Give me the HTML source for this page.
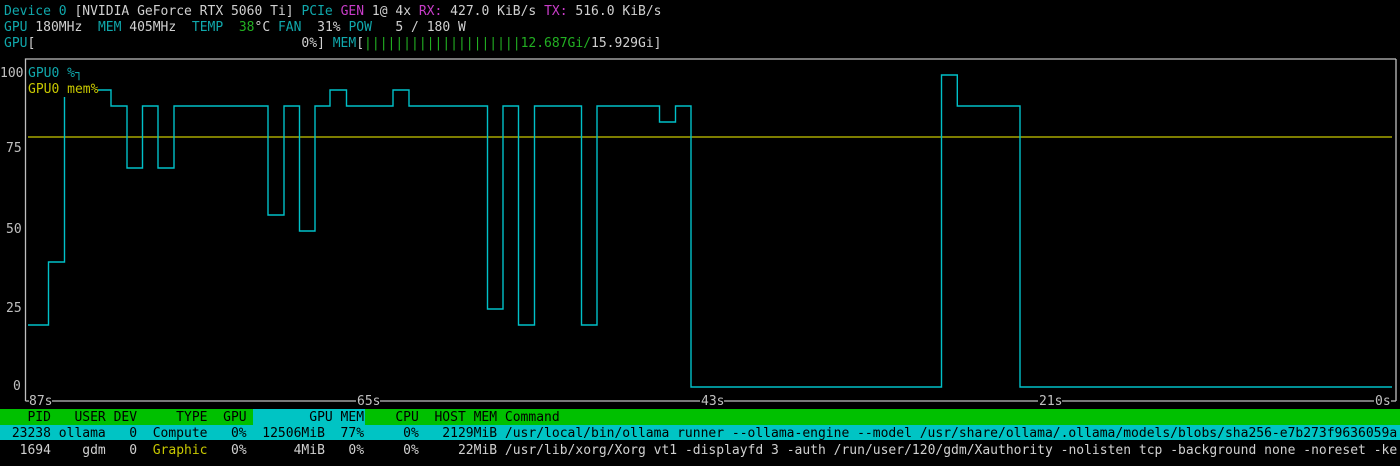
<!DOCTYPE html>
<html><head><meta charset="utf-8"><style>
html,body{margin:0;padding:0;background:#000;width:1400px;height:466px;overflow:hidden;position:relative}
.r{position:absolute;left:4px;height:16.28px;line-height:16.28px;font-family:"DejaVu Sans Mono","Liberation Mono",monospace;font-size:13.01px;white-space:pre;color:#d0d0d0}
.c{color:#10a8ac}.m{color:#c83cc8}.g{color:#22b022}.y{color:#c8c800}.k{color:#000}
.l{position:absolute;font-family:"DejaVu Sans Mono","Liberation Mono",monospace;font-size:13.01px;white-space:pre;color:#c0c0c0;line-height:16px}
</style></head><body>
<div class="r" style="top:3.5px"><span class="c">Device 0</span> [NVIDIA GeForce RTX 5060 Ti] <span class="c">PCIe</span> <span class="m">GEN</span> 1@ 4x <span class="m">RX:</span> 427.0 KiB/s <span class="m">TX:</span> 516.0 KiB/s</div>
<div class="r" style="top:19.8px"><span class="c">GPU</span> 180MHz  <span class="c">MEM</span> 405MHz  <span class="c">TEMP</span>  <span class="g">38</span>°C <span class="c">FAN</span>  31% <span class="c">POW</span>   5 / 180 W</div>
<div class="r" style="top:36.1px"><span class="c">GPU</span>[                                  0%] <span class="c">MEM</span>[<span class="g">||||||||||||||||||||12.687Gi/</span>15.929Gi]</div>

<svg style="position:absolute;left:0;top:0" width="1400" height="466">
<g fill="none" stroke="#bfbfbf" stroke-width="1.3">
<path d="M1396 59H25.5V401"/>
<path d="M1396 59V401"/>
<path d="M25.5 401H29 M52 401H356 M380 401H700 M724 401H1038 M1062 401H1374 M1391 401H1396"/>
</g>
<path d="M28 137H1392" stroke="#c8c800" stroke-width="1.3" fill="none"/>
<g fill="none" stroke="#00c0c8" stroke-width="1.4">
<path d="M28 325H48.5V262H64.5V97"/>
<path d="M98 90H111V106H127V168H142.5V106H158V168H174V106H268V215H284V106H299.5V231H315V106H330V90H346.5V106H393V90H409V106H487.5V309H503V106H518.5V325H534.5V106H581.5V325H597V106H659.5V122H675.5V106H691V387H941.5V75H957.3V106H1020V387H1392"/>
</g>
</svg>

<div class="l" style="left:0;top:66px">100</div>
<div class="l" style="left:6px;top:141px">75</div>
<div class="l" style="left:6px;top:222px">50</div>
<div class="l" style="left:6px;top:301px">25</div>
<div class="l" style="left:13px;top:379px">0</div>
<div class="l c" style="left:28px;top:66px;color:#10a8ac">GPU0 %┐</div>
<div class="l y" style="left:28px;top:82px;color:#c8c800">GPU0 mem%</div>
<div class="l" style="left:29px;top:394px">87s</div>
<div class="l" style="left:357px;top:394px">65s</div>
<div class="l" style="left:701px;top:394px">43s</div>
<div class="l" style="left:1039px;top:394px">21s</div>
<div class="l" style="left:1375px;top:394px">0s</div>

<div style="position:absolute;left:0;top:409px;width:1400px;height:16.3px;background:#00c000"></div>
<div style="position:absolute;left:253px;top:409px;width:112px;height:16.3px;background:#00c4c4"></div>
<div style="position:absolute;left:0;top:425.3px;width:1400px;height:14.5px;background:#00c4c4"></div>
<div class="r k" style="top:410px">   PID   USER DEV     TYPE  GPU        GPU MEM    CPU  HOST MEM Command</div>
<div class="r k" style="top:426.3px"> 23238 ollama   0  Compute   0%  12506MiB  77%     0%   2129MiB /usr/local/bin/ollama runner --ollama-engine --model /usr/share/ollama/.ollama/models/blobs/sha256-e7b273f9636059a</div>
<div class="r" style="top:442.6px">  1694    gdm   0  <span class="y">Graphic</span>   0%      4MiB   0%     0%     22MiB /usr/lib/xorg/Xorg vt1 -displayfd 3 -auth /run/user/120/gdm/Xauthority -nolisten tcp -background none -noreset -ke</div>
</body></html>
